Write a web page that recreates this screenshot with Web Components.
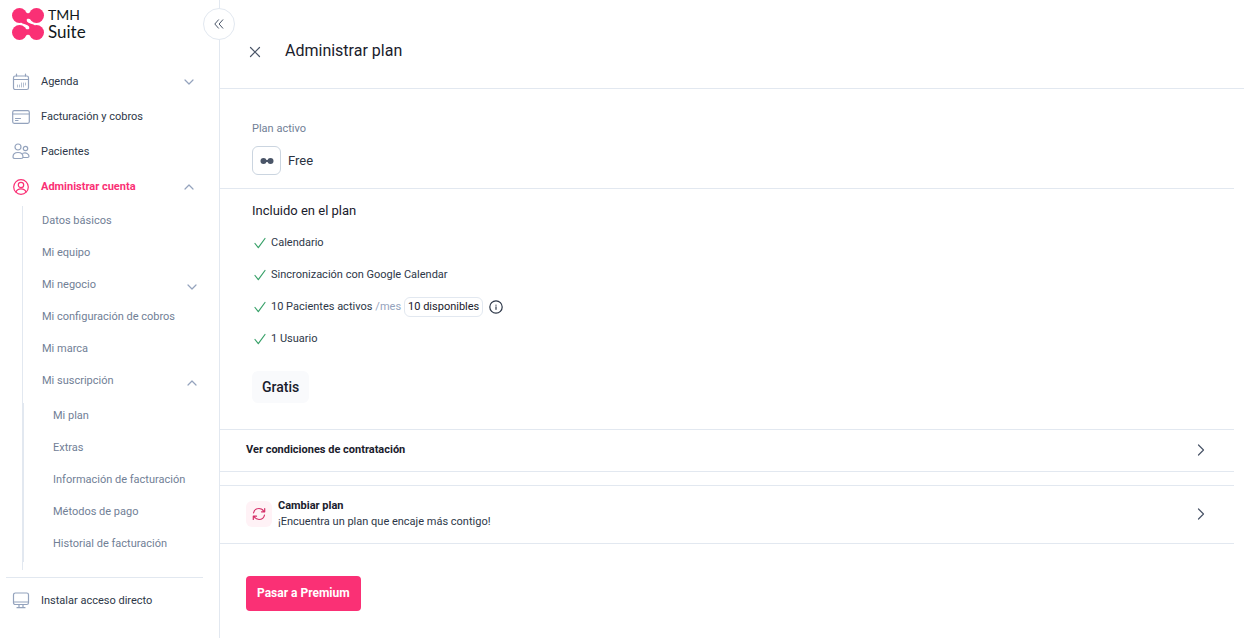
<!DOCTYPE html>
<html lang="es">
<head>
<meta charset="utf-8">
<meta name="viewport" content="width=device-width, initial-scale=1">
<title>TMH Suite - Administrar plan</title>
<style>
    body {
        margin: 0;
        background: #fff;
        color: #2d3748;
        font-family: Roboto, "Noto Sans", sans-serif;
        font-size: 11px;
        line-height: 20px;
        --line: #e2e8f0;
        --brand: #fa3075;
        --muted: #718096;
        --dark: #1a202c;
    }
</style>
</head>
<body>
<tmh-app></tmh-app>

<script>
(function () {
    function define(name, html, setup) {
        const template = document.createElement("template");
        template.innerHTML = html;
        customElements.define(name, class extends HTMLElement {
            constructor() {
                super();
                this.attachShadow({ mode: "open" }).appendChild(template.content.cloneNode(true));
            }
            connectedCallback() {
                if (setup) setup(this, this.shadowRoot);
            }
        });
    }

    // [width, height, markup], one unit per pixel
    const icons = {
        calendar: [18, 18, '<rect x="1.5" y="3" width="15" height="13.5" rx="1.8"/><path d="M1.5 6.5h15M4.5 1v2M13.5 1v2"/><path stroke-width=".7" d="M5.5 12v2M7.5 12v2M9.5 10v4M11.5 10v4M13.5 10v2"/>'],
        card: [18, 14, '<rect x=".7" y=".7" width="16.6" height="12.6" rx="1.5"/><path d="M1 4h16M3.5 8.500h5M3.500 10.500h2.500"/>'],
        people: [18, 17, '<circle cx="6" cy="4" r="3"/><circle cx="13.5" cy="5.500" r="2.200"/><path d="M1 14c0-3 2-4.500 5-4.500s5 1.500 5 4.500c0 1.300-1 1.500-2 1.500H3c-1 0-2-.2-2-1.500zM11 10.300c3-1 6 .4 6 3 0 1-.5 1.200-1.500 1.200H11"/>'],
        user: [18, 18, '<circle cx="9" cy="9" r="7.300"/><circle cx="9" cy="7" r="2.700"/><path d="M4 14c.8-2.500 2.500-3.200 5-3.200s4.200.7 5 3.200"/>'],
        screen: [18, 17, '<rect x="1.5" y="1" width="15" height="11.500" rx="1.800"/><path d="M1.500 10h15M7 12.500v3M11 12.500v3M5 15.700h8"/>'],
        down: [10, 6, '<path d="M1 1l4 4 4-4"/>'],
        up: [10, 6, '<path d="M1 5l4-4 4 4"/>'],
        right: [8, 12, '<path d="M1.500 1l5 5-5 5"/>'],
        collapse: [10, 10, '<path stroke-width="1" d="M4.500 .8L.8 5l3.700 4.200M8.800 .8L5.100 5l3.700 4.200"/>'],
        close: [12, 12, '<path d="M1.500 1.500l9 9M10.500 1.500l-9 9"/>'],
        check: [12, 12, '<path d="M1 6.500L4.300 10.700 11 1.500"/>'],
        info: [14, 14, '<circle cx="7" cy="7" r="6.200"/><path d="M7 6.800v2.500M7 5v.2"/>'],
        link: [14, 8, '<g fill="currentColor" stroke="none"><circle cx="3.500" cy="4" r="3"/><circle cx="10.500" cy="4" r="3"/><path d="M5 3h4v2H5z"/></g>'],
        refresh: [14, 14, '<path d="M1.500 6C2 3.400 4 1.500 7 1.500c2.300 0 4 1.200 5 3M12.700 1.500v3.300H9.500M12.500 8c-.5 2.600-2.500 4.500-5.500 4.500-2.300 0-4-1.200-5-3M1.300 12.500V9.200H4.500"/>'],
        logo: [32, 32, '<g fill="currentColor" stroke="none"><circle cx="7.500" cy="7.500" r="7.500"/><circle cx="24.500" cy="7.500" r="7.500"/><circle cx="7.500" cy="24.500" r="7.500"/><circle cx="24.500" cy="24.500" r="7.500"/><path d="M13 4q3 2.600 6 0v7.500q-2-1.200-3.500-.7Q14 11.500 15 13.500q1 1.500 4 2.200 3 .7 4 2L19 28q-3-2.600-6 0v-7.500q2 1.200 3.500.7Q18 20.500 17 18.500q-1-1.500-4-2.200-3-.7-4-2z"/></g>']
    };

    define("tmh-icon", `
        <style>
            :host { display: inline-flex; flex: none; }
            svg { display: block; fill: none; stroke: currentColor; stroke-width: 1.2; stroke-linecap: round; stroke-linejoin: round; }
        </style>
        <span id="box"></span>
    `, (el, root) => {
        const [w, h, body] = icons[el.getAttribute("name")];
        root.getElementById("box").innerHTML =
            `<svg width="${w}" height="${h}" viewBox="0 0 ${w} ${h}" aria-hidden="true">${body}</svg>`;
    });

    define("tmh-nav-item", `
        <style>
            :host { display: block; }
            a, button {
                display: flex;
                align-items: center;
                box-sizing: border-box;
                width: 100%;
                height: 35px;
                padding: 0 25px 0 12px;
                border: 0;
                background: none;
                font: inherit;
                color: inherit;
                text-align: left;
                text-decoration: none;
                cursor: pointer;
            }
            .lead { display: flex; width: 29px; color: #94a3bd; }
            .label { flex: 1; }
            .arrow { color: #94a3bd; }
            :host([active]) .label { font-weight: 700; color: var(--brand); }
            :host([active]) .lead { color: var(--brand); }
            :host([sub]) { color: var(--muted); }
            :host([sub]) :is(a, button) { height: 20px; padding: 0 22px 0 19px; }
            :host([sub]) .arrow { padding-top: 4px; }
            :host([sub=deep]) a { padding-left: 29px; }
        </style>
    `, (el, root) => {
        const open = el.getAttribute("arrow");
        const icon = el.getAttribute("icon");
        const control = document.createElement(open ? "button" : "a");
        if (open) {
            control.type = "button";
            control.setAttribute("aria-expanded", open === "up");
        } else {
            control.href = "#";
        }
        control.innerHTML =
            (icon ? `<span class="lead"><tmh-icon name="${icon}"></tmh-icon></span>` : "") +
            `<span class="label"><slot></slot></span>` +
            (open ? `<tmh-icon class="arrow" name="${open}"></tmh-icon>` : "");
        root.appendChild(control);
    });

    define("tmh-sidebar", `
        <style>
            :host { display: block; position: relative; box-sizing: border-box; width: 220px; border-right: 1px solid var(--line); }
            .logo { display: flex; align-items: center; gap: 4px; height: 32px; padding: 8px 12px 0; color: var(--brand); text-decoration: none; }
            .logo span { display: block; font-family: Lato, sans-serif; font-size: 17px; line-height: 18px; color: #111820; }
            .logo .top { font-size: 14px; line-height: 16px; }
            .toggle {
                position: absolute;
                top: 8px;
                right: -16px;
                display: flex;
                align-items: center;
                justify-content: center;
                width: 32px;
                height: 32px;
                padding: 0;
                border: 1px solid var(--line);
                border-radius: 50%;
                background: #fff;
                color: #4a5568;
                cursor: pointer;
            }
            nav { padding-top: 24px; }
            .group { display: flex; flex-direction: column; gap: 12px; margin: 2px 0 7px 22px; padding: 5px 0 8px; border-left: 1px solid var(--line); }
            .nested { display: flex; flex-direction: column; gap: 12px; padding: 3px 0 8px; border-left: 1px solid var(--line); }
            .foot { margin: 0 16px 0 6px; padding-top: 5px; border-top: 1px solid var(--line); }
            .foot tmh-nav-item { margin-left: -6px; }
        </style>
        <a class="logo" href="#"><tmh-icon name="logo"></tmh-icon><div><span class="top">TMH</span><span>Suite</span></div></a>
        <button class="toggle" type="button" aria-label="Contraer menú"><tmh-icon name="collapse"></tmh-icon></button>
        <nav>
            <tmh-nav-item icon="calendar" arrow="down">Agenda</tmh-nav-item>
            <tmh-nav-item icon="card">Facturación y cobros</tmh-nav-item>
            <tmh-nav-item icon="people">Pacientes</tmh-nav-item>
            <tmh-nav-item icon="user" arrow="up" active>Administrar cuenta</tmh-nav-item>
            <div class="group">
                <tmh-nav-item sub>Datos básicos</tmh-nav-item>
                <tmh-nav-item sub>Mi equipo</tmh-nav-item>
                <tmh-nav-item sub arrow="down">Mi negocio</tmh-nav-item>
                <tmh-nav-item sub>Mi configuración de cobros</tmh-nav-item>
                <tmh-nav-item sub>Mi marca</tmh-nav-item>
                <tmh-nav-item sub arrow="up">Mi suscripción</tmh-nav-item>
                <div class="nested">
                    <tmh-nav-item sub="deep">Mi plan</tmh-nav-item>
                    <tmh-nav-item sub="deep">Extras</tmh-nav-item>
                    <tmh-nav-item sub="deep">Información de facturación</tmh-nav-item>
                    <tmh-nav-item sub="deep">Métodos de pago</tmh-nav-item>
                    <tmh-nav-item sub="deep">Historial de facturación</tmh-nav-item>
                </div>
            </div>
            <div class="foot">
                <tmh-nav-item icon="screen">Instalar acceso directo</tmh-nav-item>
            </div>
        </nav>
    `);

    define("tmh-feature", `
        <style>
            :host { display: flex; align-items: center; height: 20px; }
            tmh-icon { margin: 0 5px 0 2px; color: #38a169; }
        </style>
        <tmh-icon name="check"></tmh-icon><slot></slot>
    `);

    define("tmh-action-row", `
        <style>
            :host { display: block; border: 1px solid var(--line); border-width: 1px 0; }
            button {
                display: flex;
                align-items: center;
                width: 100%;
                padding: 12px 29px 13px 26px;
                border: 0;
                background: none;
                font: inherit;
                color: inherit;
                text-align: left;
                cursor: pointer;
            }
            .text { flex: 1; line-height: 16px; }
            .arrow { color: #4a5568; }
        </style>
        <button type="button">
            <slot name="icon"></slot>
            <span class="text"><slot></slot></span>
            <tmh-icon class="arrow" name="right"></tmh-icon>
        </button>
    `);

    define("tmh-plan", `
        <style>
            :host { display: block; flex: 1; min-width: 0; }
            header { display: flex; align-items: center; gap: 24px; box-sizing: border-box; height: 89px; padding: 14px 0 0 29px; border-bottom: 1px solid var(--line); }
            .close { display: flex; padding: 2px 0 0; border: 0; background: none; color: #4a5568; cursor: pointer; }
            h1 { margin: 0; font-size: 16px; font-weight: 400; color: var(--dark); }
            .body { margin-right: 10px; }
            .active { padding: 30px 32px 13px; border-bottom: 1px solid var(--line); }
            .active small { display: block; font-size: 11px; color: var(--muted); }
            .plan { display: flex; align-items: center; gap: 7px; margin-top: 7px; font-size: 13px; color: #2a3342; }
            .badge { display: flex; align-items: center; justify-content: center; width: 27px; height: 27px; border: 1px solid #cbd5e0; border-radius: 6px; color: #4a5568; }
            .included { padding: 12px 32px 26px; }
            h2 { margin: 0 0 12px; font-size: 13px; font-weight: 400; color: var(--dark); }
            .features { display: flex; flex-direction: column; gap: 12px; }
            .month { margin: 0 3px; color: #94a3bd; }
            .left { margin-right: 6px; padding: 0 3px; border: 1px solid var(--line); border-radius: 6px; line-height: 18px; color: var(--dark); }
            .info { display: flex; padding: 0; border: 0; background: none; color: #2d3748; }
            .price { display: inline-block; margin-top: 22px; padding: 0 10px; border-radius: 6px; background: #f9fafc; font-size: 14px; font-weight: 500; line-height: 32px; color: var(--dark); }
            b { font-weight: 700; color: var(--dark); }
            .rows { display: flex; flex-direction: column; gap: 13px; }
            .swap { display: flex; align-items: center; justify-content: center; width: 26px; height: 26px; margin-right: 6px; border-radius: 6px; background: #fff2f6; color: #d53069; }
            .premium { margin: 32px 26px 26px; padding: 0 11px; border: 0; border-radius: 4px; background: var(--brand); color: #fff; font: inherit; font-size: 12px; font-weight: 700; line-height: 35px; cursor: pointer; }
        </style>
        <header>
            <button class="close" type="button" aria-label="Cerrar"><tmh-icon name="close"></tmh-icon></button>
            <h1>Administrar plan</h1>
        </header>
        <div class="body">
            <section class="active">
                <small>Plan activo</small>
                <div class="plan"><span class="badge"><tmh-icon name="link"></tmh-icon></span>Free</div>
            </section>
            <section class="included">
                <h2>Incluido en el plan</h2>
                <div class="features">
                    <tmh-feature>Calendario</tmh-feature>
                    <tmh-feature>Sincronización con Google Calendar</tmh-feature>
                    <tmh-feature>10 Pacientes activos<span class="month">/mes</span><span class="left">10 disponibles</span>
                        <button class="info" type="button" aria-label="Información"><tmh-icon name="info"></tmh-icon></button></tmh-feature>
                    <tmh-feature>1 Usuario</tmh-feature>
                </div>
                <div class="price">Gratis</div>
            </section>
            <div class="rows">
                <tmh-action-row><b>Ver condiciones de contratación</b></tmh-action-row>
                <tmh-action-row>
                    <span class="swap" slot="icon"><tmh-icon name="refresh"></tmh-icon></span>
                    <b>Cambiar plan</b><br>¡Encuentra un plan que encaje más contigo!
                </tmh-action-row>
            </div>
            <button class="premium" type="button">Pasar a Premium</button>
        </div>
    `);

    define("tmh-app", `
        <style>
            :host { display: flex; min-height: 100vh; }
            tmh-sidebar { flex: none; }
        </style>
        <tmh-sidebar></tmh-sidebar>
        <tmh-plan role="main"></tmh-plan>
    `);
})();
</script>
</body>
</html>
